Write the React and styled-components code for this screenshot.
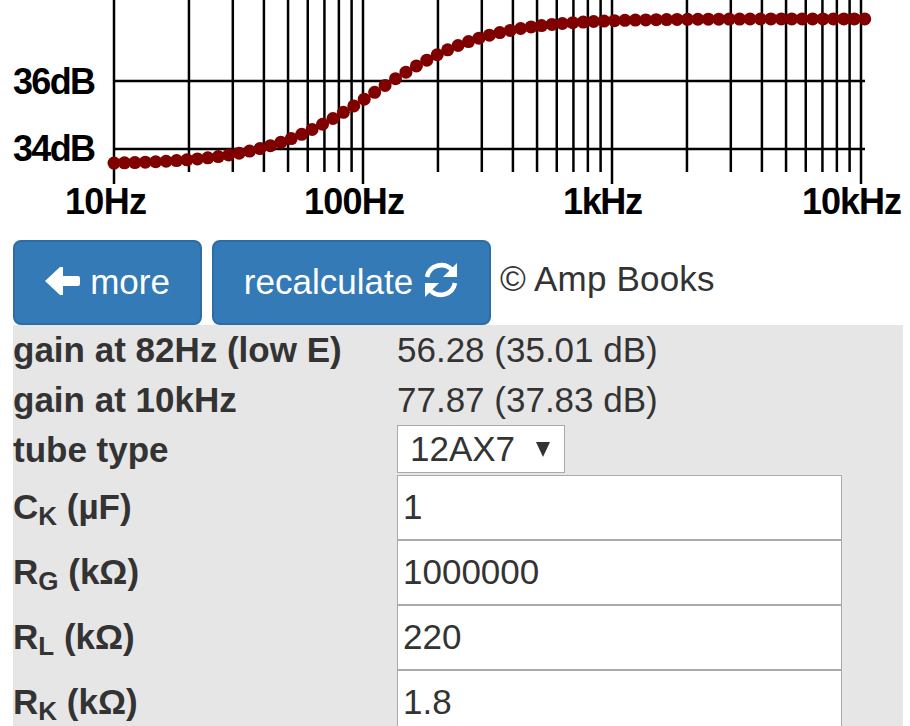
import React from 'react'
import styled, { createGlobalStyle } from 'styled-components'

const GlobalStyle = createGlobalStyle`
html, body {
  margin: 0;
  padding: 0;
  background: #fff;
  overflow: hidden;
}
body {
  font-family: "Liberation Sans", Arial, sans-serif;
  font-size: 35px;
  color: #333;
}
`;

const Page = styled.div`
width: 910px;
height: 726px;
overflow: hidden;
`;

const ChartSvg = styled.svg`
display: block;
width: 910px;
height: 240px;
`;

const AxisLabel = styled.text`
font-family: "Liberation Sans", Arial, sans-serif;
font-size: 36px;
font-weight: 700;
fill: #000;
`;

const Toolbar = styled.div`
display: flex;
align-items: center;
gap: 10px;
padding-left: 13px;
height: 85px;
`;

const ActionButton = styled.button`
display: flex;
align-items: center;
justify-content: center;
gap: 10px;
box-sizing: border-box;
width: ${props => props.$width}px;
height: 85px;
padding: 0 0 2px;
background: #337ab7;
border: 2px solid #2e6da4;
border-radius: 8px;
color: #fff;
font-family: inherit;
font-size: 35px;
`;

const Icon = styled.svg`
margin-top: ${props => props.$lift}px;
`;

const Copyright = styled.div`
margin-left: -1px;
margin-top: -8px;
letter-spacing: 0.2px;
`;

const Panel = styled.div`
margin-left: 13px;
width: 890px;
background: #e6e6e6;
`;

const Row = styled.div`
display: flex;
height: ${props => props.$height}px;
align-items: center;
`;

const Label = styled.div`
width: 384px;
font-weight: 700;
white-space: nowrap;
`;

const InputLabel = styled(Label)`
margin-top: -2px;
`;

const Value = styled.div`
white-space: nowrap;
`;

const Select = styled.div`
display: flex;
align-items: center;
justify-content: space-between;
box-sizing: border-box;
width: 168px;
height: 48px;
margin-top: -2px;
padding: 0 14px 0 12px;
background: #fff;
border: 1px solid #aaa;
`;

const Caret = styled.span`
width: 0;
height: 0;
border-left: 7.5px solid transparent;
border-right: 7.5px solid transparent;
border-top: 15px solid #333;
`;

const NumberInput = styled.input`
display: block;
box-sizing: border-box;
width: 445px;
height: 65px;
padding: 0 5px 2px;
background: #fff;
border: 1px solid #aaa;
border-radius: 0;
color: #333;
font-family: inherit;
font-size: 35px;
outline: none;
`;

const Sub = styled.sub`
font-size: 26px;
line-height: 0;
position: relative;
bottom: -0.25em;
vertical-align: baseline;
`;

// plot geometry, 249px per decade and 34px per dB
const X0 = 114
const DECADE = 249
const xOf = f => X0 + Math.log10(f / 10) * DECADE
const yOf = db => 149 - (db - 34) * 34
const gain = f => 33.55 + 10 * Math.log10((1 + (f / 88) ** 2) / (1 + (f / 144) ** 2))

const majors = [10, 100, 1000, 10000]
const minors = [1, 10, 100].flatMap(d => [2, 3, 4, 5, 6, 7, 8, 9].map(n => n * d * 10))
const dots = Array.from({ length: 73 }, (_, i) => 10 * 10 ** (i * 3.015 / 72))

const axisLabels = [
  { text: '36dB', x: 13, y: 94, w: 83 },
  { text: '34dB', x: 13, y: 161, w: 83 },
  { text: '10Hz', x: 65, y: 214, w: 82 },
  { text: '100Hz', x: 304, y: 214, w: 101 },
  { text: '1kHz', x: 563, y: 214, w: 80 },
  { text: '10kHz', x: 802, y: 214, w: 100 },
]

const GainChart = () => (
  <ChartSvg viewBox="0 0 910 240">
    <g stroke="#000" strokeWidth="2.5" fill="none">
      {[81, 149].map(y => <line key={y} x1={X0} x2="865" y1={y} y2={y} />)}
      {minors.map(f => <line key={f} x1={xOf(f)} x2={xOf(f)} y1="0" y2="172" />)}
      {majors.map(f => <line key={f} x1={xOf(f)} x2={xOf(f)} y1="0" y2="184" />)}
    </g>
    <g fill="#800000">
      {dots.map(f => <circle key={f} cx={xOf(f)} cy={yOf(gain(f))} r="6.5" />)}
    </g>
    {axisLabels.map(l => (
      <AxisLabel key={l.text} x={l.x} y={l.y} textLength={l.w} lengthAdjust="spacing">{l.text}</AxisLabel>
    ))}
  </ChartSvg>
)

const ArrowLeftIcon = () => (
  <Icon $lift={-2} width="35" height="28" viewBox="0 0 35 28">
    <path d="M0 14 L15 0 H18 V9 H33 Q35 9 35 11 V17 Q35 19 33 19 H18 V28 H15 Z" fill="#fff" />
  </Icon>
)

const RefreshIcon = () => (
  <Icon $lift={-4} width="36" height="36" viewBox="0 0 36 36" fill="none" stroke="#fff" strokeWidth="4.5">
    <path d="M4 15 A14.5 14.5 0 0 1 29 8" />
    <path d="M32 21 A14.5 14.5 0 0 1 7 28" />
    <path d="M34 1 V15 H20 Z" fill="#fff" stroke="none" />
    <path d="M2 35 V21 H16 Z" fill="#fff" stroke="none" />
  </Icon>
)

const inputs = [
  ['C', 'K', 'µF', '1'],
  ['R', 'G', 'kΩ', '1000000'],
  ['R', 'L', 'kΩ', '220'],
  ['R', 'K', 'kΩ', '1.8'],
]

const App = () => (
  <Page>
    <GlobalStyle />
    <GainChart />
    <Toolbar>
      <ActionButton $width={189}><ArrowLeftIcon /> more</ActionButton>
      <ActionButton $width={279}>recalculate <RefreshIcon /></ActionButton>
      <Copyright>© Amp Books</Copyright>
    </Toolbar>
    <Panel>
      <Row $height={50}>
        <Label>gain at 82Hz (low E)</Label>
        <Value>56.28 (35.01 dB)</Value>
      </Row>
      <Row $height={50}>
        <Label>gain at 10kHz</Label>
        <Value>77.87 (37.83 dB)</Value>
      </Row>
      <Row $height={50}>
        <Label>tube type</Label>
        <Select>12AX7<Caret /></Select>
      </Row>
      {inputs.map(([sym, sub, unit, value]) => (
        <Row key={sub} $height={65}>
          <InputLabel>{sym}<Sub>{sub}</Sub> ({unit})</InputLabel>
          <NumberInput defaultValue={value} />
        </Row>
      ))}
    </Panel>
  </Page>
)

export default App
